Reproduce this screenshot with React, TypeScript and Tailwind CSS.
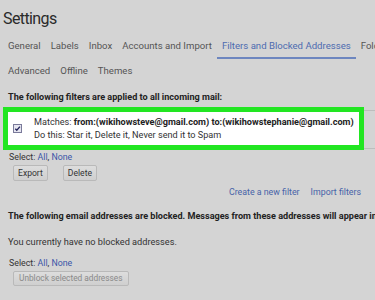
import type { ReactNode } from 'react'

const tabsTop = ['General', 'Labels', 'Inbox', 'Accounts and Import']
const tabsBottom = ['Advanced', 'Offline', 'Themes']

function Btn({ children, disabled }: { children: ReactNode; disabled?: boolean }) {
  return (
    <div
      className={
        'flex items-center rounded-[2px] border border-[#b9b9b9] bg-gradient-to-b from-[#dddddd] to-[#cfcfcf] ' +
        (disabled ? 'px-[5px] h-[15px] text-[8.3px] text-[#8a8a8a]' : 'px-[4px] h-[16px] text-[8.6px] text-[#333]')
      }
    >
      {children}
    </div>
  )
}

function SelectLine() {
  return (
    <div className="text-[8.8px] text-[#333] leading-[10px]">
      Select: <span className="text-[#3a55a8]">All</span>, <span className="text-[#3a55a8]">None</span>
    </div>
  )
}

export default function App() {
  return (
    <div
      className="w-[375px] h-[300px] overflow-hidden bg-[#d4d4d4] text-[#222] whitespace-nowrap"
      style={{ fontFamily: 'Roboto, "Liberation Sans", Arial, sans-serif' }}
    >
      <div className="pl-[3px] pt-[10px] text-[16px] leading-[18px] tracking-[-0.6px] text-[#2a2a2a]">Settings</div>

      {/* tabs */}
      <div className="mt-[12px] flex items-start pl-[8px] gap-[10px] text-[9.6px] leading-[12px] text-[#555]">
        {tabsTop.map(t => (
          <div key={t}>{t}</div>
        ))}
        <div className="-mx-[5px] px-[5px] pb-[5px] border-b-2 border-[#6d86bf] text-[#4d6bb0]">Filters and Blocked Addresses</div>
        <div>Folders</div>
      </div>
      <div className="mt-[6px] flex pl-[8px] gap-[10px] text-[9.6px] leading-[12px] text-[#555]">
        {tabsBottom.map(t => (
          <div key={t}>{t}</div>
        ))}
      </div>

      {/* filters */}
      <div className="mt-[15px] pl-[8px] text-[9.1px] font-bold text-[#222] leading-[10px]">
        The following filters are applied to all incoming mail:
      </div>

      <div className="mt-[5px] flex items-start">
        <div className="ml-[3px] w-[361px] h-[43px] border-[5px] border-[#22e622] bg-white flex items-center pl-[5px]">
          <div className="w-[9px] h-[9px] border border-[#7a7a9a] bg-[#e6e6f0] flex items-center justify-center shrink-0">
            <svg width="7" height="7" viewBox="0 0 8 8">
              <path d="M1.5 4.2 L3.2 6 L6.8 1.8" fill="none" stroke="#23235a" strokeWidth="1.5" />
            </svg>
          </div>
          <div className="ml-[12px] text-[9.15px] leading-[13px] text-[#333]">
            <div>
              Matches: <span className="font-bold text-[#222]">from:(wikihowsteve@gmail.com) to:(wikihowstephanie@gmail.com)</span>
            </div>
            <div>Do this: Star it, Delete it, Never send it to Spam</div>
          </div>
        </div>
        <div className="flex-1 mt-[3px] h-[39px] border-y border-[#bdbdbd]" />
      </div>

      <div className="mt-[2px] pl-[9px]">
        <SelectLine />
      </div>
      <div className="mt-[3px] pl-[13px] flex gap-[15px]">
        <Btn>Export</Btn>
        <Btn>Delete</Btn>
      </div>

      <div className="mt-[6px] flex justify-end pr-[14px] gap-[11px] text-[8.8px] leading-[10px] text-[#4763a8]">
        <span>Create a new filter</span>
        <span>Import filters</span>
      </div>

      {/* blocked */}
      <div className="mt-[14px] pl-[8px] text-[9.1px] font-bold text-[#222] leading-[10px]">
        The following email addresses are blocked. Messages from these addresses will appear in Spam:
      </div>

      <div className="mt-[16px] pl-[8px] text-[9.2px] text-[#333] leading-[10px]">You currently have no blocked addresses.</div>

      <div className="mt-[11px] pl-[9px]">
        <SelectLine />
      </div>
      <div className="mt-[3px] pl-[13px] flex">
        <Btn disabled>Unblock selected addresses</Btn>
      </div>
    </div>
  )
}
